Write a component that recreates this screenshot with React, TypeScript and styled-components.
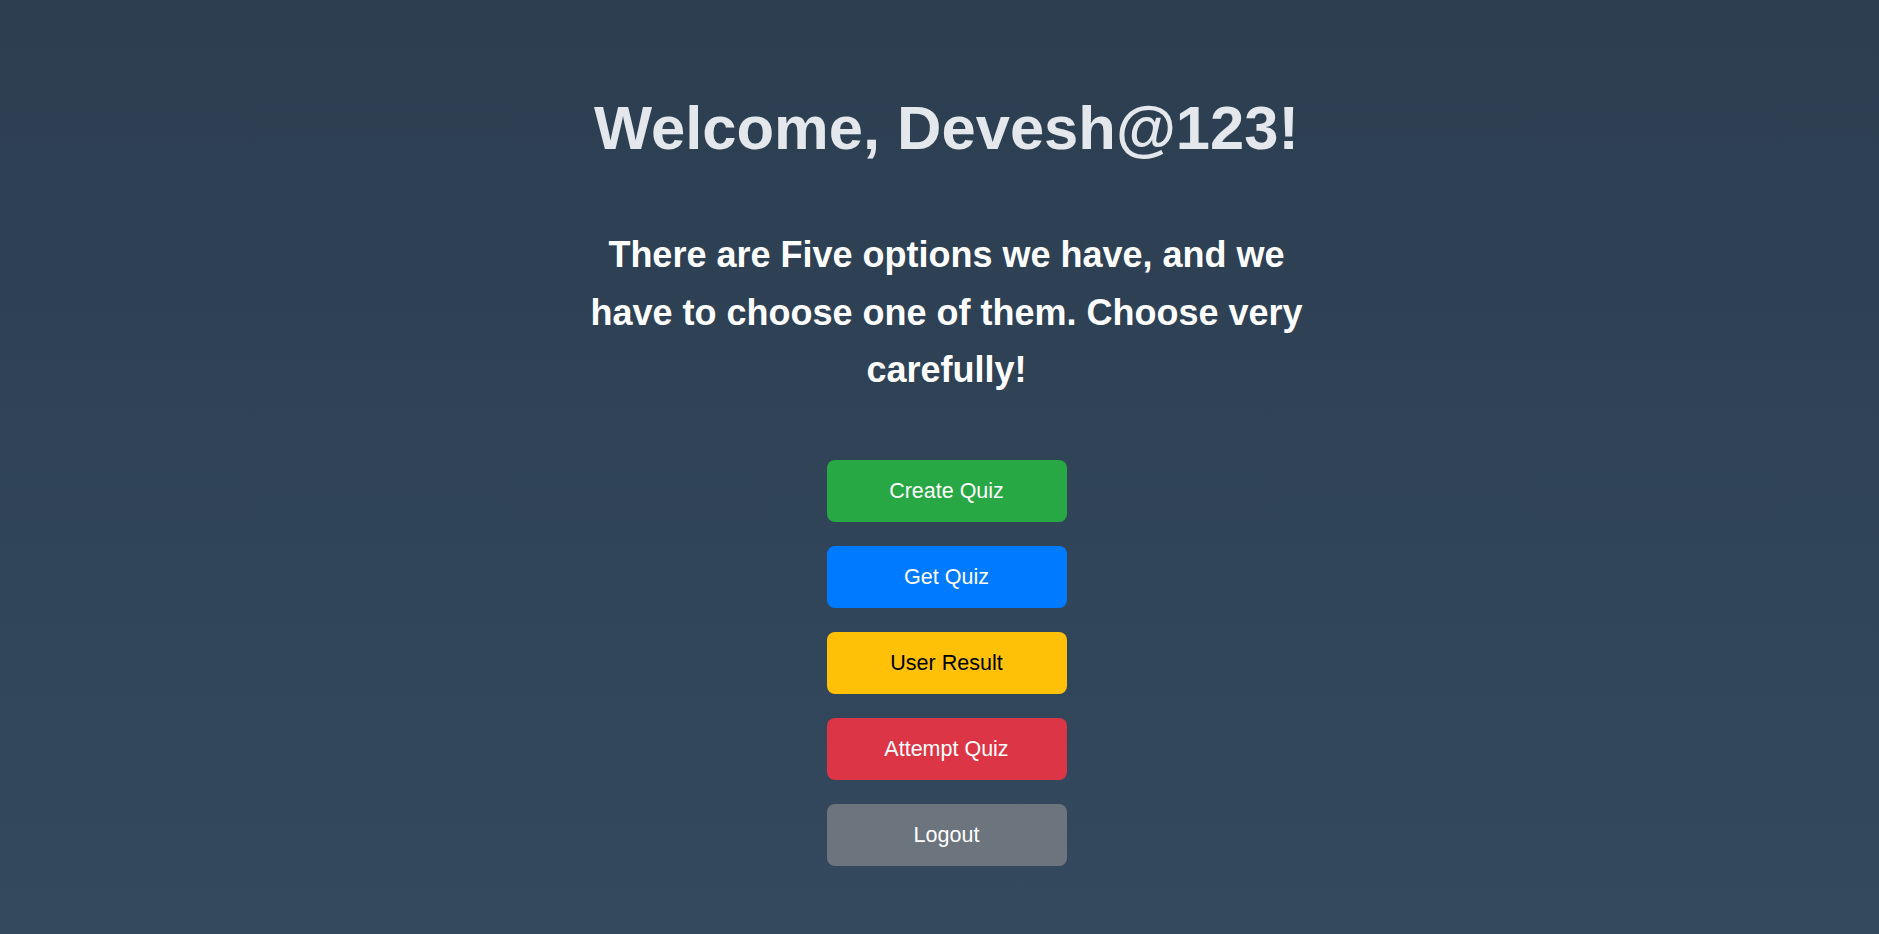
import { FC } from "react";
import styled, { createGlobalStyle } from "styled-components";

const colors = {
  bgTop: "#2c3e50",
  bgBottom: "#34495e",
  title: "#e4e7eb",
  white: "#ffffff",
  green: "#28a745",
  blue: "#007bff",
  yellow: "#ffc107",
  red: "#dc3545",
  gray: "#6c757d",
};

const GlobalStyle = createGlobalStyle`
  * {
    box-sizing: border-box;
  }
  html, body {
    margin: 0;
    padding: 0;
  }
  body {
    font-family: "Liberation Sans", Arial, sans-serif;
  }
`;

const Page = styled.div`
  min-height: 100vh;
  padding: 93px 0 0 14px;
  background: linear-gradient(to bottom, ${colors.bgTop}, ${colors.bgBottom});
  display: flex;
  flex-direction: column;
  align-items: center;
`;

const Title = styled.h1`
  margin: 0;
  font-size: 61.5px;
  line-height: 70px;
  font-weight: bold;
  color: ${colors.title};
  text-align: center;
`;

const Message = styled.p`
  margin: 63px 0 0;
  max-width: 740px;
  font-size: 36px;
  line-height: 57.6px;
  font-weight: bold;
  color: ${colors.white};
  text-align: center;
`;

const ButtonStack = styled.div`
  margin-top: 61px;
  display: flex;
  flex-direction: column;
  gap: 24px;
`;

type Variant = "green" | "blue" | "yellow" | "red" | "gray";

interface IActionButton {
  $variant: Variant;
}

const ActionButton = styled.button<IActionButton>`
  width: 240px;
  height: 62px;
  border: none;
  border-radius: 8px;
  padding-top: 2px;
  font-family: "Liberation Sans", Arial, sans-serif;
  font-size: 21.5px;
  cursor: pointer;
  background-color: ${(p) => colors[p.$variant]};
  color: ${(p) => (p.$variant === "yellow" ? "#000000" : colors.white)};
`;

const actions: { label: string; variant: Variant }[] = [
  { label: "Create Quiz", variant: "green" },
  { label: "Get Quiz", variant: "blue" },
  { label: "User Result", variant: "yellow" },
  { label: "Attempt Quiz", variant: "red" },
  { label: "Logout", variant: "gray" },
];

const App: FC = () => {
  return (
    <>
      <GlobalStyle />
      <Page>
        <Title>Welcome, Devesh@123!</Title>
        <Message>
          There are Five options we have, and we have to choose one of them.
          Choose very carefully!
        </Message>
        <ButtonStack>
          {actions.map((a) => (
            <ActionButton key={a.label} $variant={a.variant}>
              {a.label}
            </ActionButton>
          ))}
        </ButtonStack>
      </Page>
    </>
  );
};

export default App;
